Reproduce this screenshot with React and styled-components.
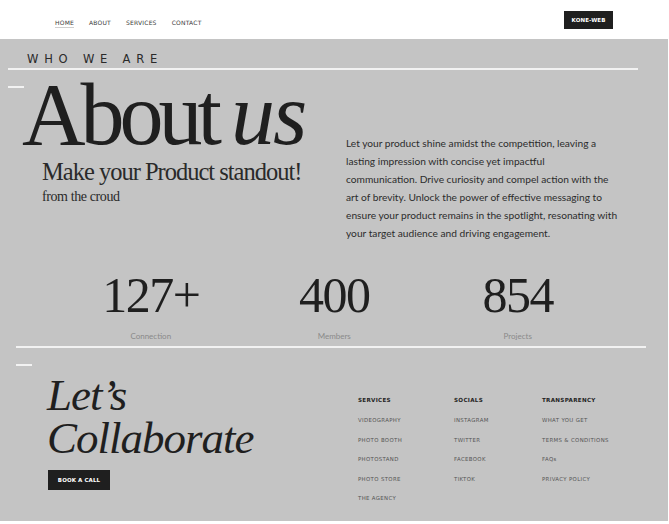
import React from 'react';
import styled, { createGlobalStyle } from 'styled-components';

const GlobalStyle = createGlobalStyle`
    html, body { margin: 0; padding: 0; background: #ffffff; }
    * { box-sizing: border-box; }
`;

const serif = `"Liberation Serif", "DejaVu Serif", serif`;
const sans = `"DejaVu Sans", "Open Sans", sans-serif`;
const body = `"Lato", "Open Sans", sans-serif`;

const Nav = styled.nav`
    display: flex;
    align-items: center;
    justify-content: space-between;
    height: 39px;
    padding: 0 56px 0 55px;
    background: #ffffff;
`;

const NavLinks = styled.ul`
    display: flex;
    gap: 15px;
    margin: 8px 0 0;
    padding: 0;
    list-style: none;
`;

const NavLink = styled.li`
    font-family: ${sans};
    font-size: 6px;
    color: #3a3a3a;
    letter-spacing: 0.2px;
    padding-bottom: 1px;
    border-bottom: 1px solid ${p => p.$active ? '#cfcfcf' : 'transparent'};
`;

const DarkButton = styled.button`
    display: flex;
    align-items: center;
    justify-content: center;
    width: ${p => p.$w}px;
    height: ${p => p.$h}px;
    border: none;
    background: #1f1f1f;
    color: #ffffff;
    font-family: ${sans};
    font-weight: 700;
    font-size: 5.5px;
    letter-spacing: 0.1px;
    padding: 0;
`;

const Section = styled.main`
    width: 668px;
    height: 482px;
    background: #c4c4c4;
    padding-top: 15px;
    overflow: hidden;
`;

const Eyebrow = styled.h4`
    margin: 0 0 0 27px;
    font-family: ${sans};
    font-weight: 400;
    font-size: 11.5px;
    line-height: 11.5px;
    letter-spacing: 5.8px;
    color: #2a2a2a;
`;

const Rule = styled.div`
    margin: ${p => p.$top}px 0 0 ${p => p.$left}px;
    width: ${p => p.$width}px;
    height: 2px;
    background: #f2f2f2;
`;

const Dash = styled.div`
    flex: none;
    width: 16px;
    height: 2px;
    background: #f2f2f2;
    margin-top: ${p => p.$top}px;
    margin-left: ${p => p.$left || 0}px;
`;

const Hero = styled.section`
    display: grid;
    grid-template-columns: 338px 1fr;
`;

const TitleRow = styled.div`
    display: flex;
    align-items: flex-start;
    margin-left: 8px;
`;

const TitleBlock = styled.div`
    margin-left: -2px;
`;

const BigTitle = styled.h1`
    margin: 1px 0 0;
    font-family: ${serif};
    font-weight: 400;
    font-size: 88px;
    line-height: 88px;
    letter-spacing: -5px;
    color: #1f1f1f;
    white-space: nowrap;

    em {
        font-style: italic;
        letter-spacing: -2px;
        margin-left: 14px;
    }
`;

const Subtitle = styled.h2`
    margin: 0 0 0 20px;
    font-family: ${serif};
    font-weight: 400;
    font-size: 24.5px;
    line-height: 26px;
    letter-spacing: -1px;
    color: #2a2a2a;
    white-space: nowrap;
`;

const Small = styled.p`
    margin: 4px 0 0 20px;
    font-family: ${serif};
    font-size: 14px;
    line-height: 16px;
    letter-spacing: -0.4px;
    color: #2a2a2a;
`;

const Paragraph = styled.p`
    margin: 64px 0 0 8px;
    font-family: ${body};
    font-size: 10.2px;
    line-height: 18px;
    color: #2c2c2c;
    white-space: nowrap;
`;

const Stats = styled.section`
    display: grid;
    grid-template-columns: repeat(3, 183.5px);
    margin: 25px 0 0 59px;
`;

const Stat = styled.div`
    display: flex;
    flex-direction: column;
    align-items: center;
`;

const StatValue = styled.div`
    font-family: ${serif};
    font-size: 50px;
    line-height: 56px;
    letter-spacing: -1.5px;
    color: #1f1f1f;
`;

const StatLabel = styled.div`
    margin-top: 8px;
    font-family: ${body};
    font-size: 8px;
    color: #8a8a8a;
`;

const Footer = styled.footer`
    display: flex;
`;

const Collab = styled.div`
    width: 358px;
    padding-left: 48px;
`;

const CollabTitle = styled.h2`
    margin: 8px 0 0 -1px;
    font-family: ${serif};
    font-style: italic;
    font-weight: 400;
    font-size: 45px;
    line-height: 43px;
    letter-spacing: -1px;
    color: #1f1f1f;
`;

const BookWrap = styled.div`
    margin-top: 10px;
`;

const LinkCols = styled.div`
    display: flex;
    padding-top: 31px;
`;

const LinkCol = styled.ul`
    width: ${p => p.$w}px;
    margin: 0;
    padding: 0;
    list-style: none;
    display: flex;
    flex-direction: column;
    gap: 12.5px;
`;

const ColHead = styled.li`
    font-family: ${sans};
    font-weight: 700;
    font-size: 5.6px;
    line-height: 7px;
    letter-spacing: 0.3px;
    color: #1f1f1f;
`;

const ColItem = styled.li`
    margin-top: ${p => p.$first ? 1 : 0}px;
    font-family: ${sans};
    font-size: 5.4px;
    line-height: 7px;
    letter-spacing: 0.35px;
    color: #555555;
`;

const footerCols = [
    { title: 'SERVICES', w: 96, items: ['VIDEOGRAPHY', 'PHOTO BOOTH', 'PHOTOSTAND', 'PHOTO STORE', 'THE AGENCY'] },
    { title: 'SOCIALS', w: 88, items: ['INSTAGRAM', 'TWITTER', 'FACEBOOK', 'TIKTOK'] },
    { title: 'TRANSPARENCY', w: 110, items: ['WHAT YOU GET', 'TERMS & CONDITIONS', 'FAQs', 'PRIVACY POLICY'] },
];

const stats = [
    { value: '127+', label: 'Connection' },
    { value: '400', label: 'Members' },
    { value: '854', label: 'Projects' },
];

export default function App() {
    return (
        <>
            <GlobalStyle />
            <Nav>
                <NavLinks>
                    <NavLink $active>HOME</NavLink>
                    <NavLink>ABOUT</NavLink>
                    <NavLink>SERVICES</NavLink>
                    <NavLink>CONTACT</NavLink>
                </NavLinks>
                <DarkButton $w={49} $h={18}>KONE-WEB</DarkButton>
            </Nav>
            <Section>
                <Eyebrow>WHO WE ARE</Eyebrow>
                <Rule $top={2} $left={8} $width={630} />
                <Hero>
                    <TitleRow>
                        <Dash $top={16} />
                        <TitleBlock>
                            <BigTitle>About<em>us</em></BigTitle>
                            <Subtitle>Make your Product standout!</Subtitle>
                            <Small>from the croud</Small>
                        </TitleBlock>
                    </TitleRow>
                    <Paragraph>
                        Let your product shine amidst the competition, leaving a<br />
                        lasting impression with concise yet impactful<br />
                        communication. Drive curiosity and compel action with the<br />
                        art of brevity. Unlock the power of effective messaging to<br />
                        ensure your product remains in the spotlight, resonating with<br />
                        your target audience and driving engagement.
                    </Paragraph>
                </Hero>
                <Stats>
                    {stats.map(s => (
                        <Stat key={s.label}>
                            <StatValue>{s.value}</StatValue>
                            <StatLabel>{s.label}</StatLabel>
                        </Stat>
                    ))}
                </Stats>
                <Rule $top={5} $left={16} $width={630} />
                <Dash $top={16} $left={16} />
                <Footer>
                    <Collab>
                        <CollabTitle>Let’s<br />Collaborate</CollabTitle>
                        <BookWrap>
                            <DarkButton $w={62} $h={20}>BOOK A CALL</DarkButton>
                        </BookWrap>
                    </Collab>
                    <LinkCols>
                        {footerCols.map(c => (
                            <LinkCol key={c.title} $w={c.w}>
                                <ColHead>{c.title}</ColHead>
                                {c.items.map((it, i) => (
                                    <ColItem key={it} $first={i === 0}>{it}</ColItem>
                                ))}
                            </LinkCol>
                        ))}
                    </LinkCols>
                </Footer>
            </Section>
        </>
    );
}
